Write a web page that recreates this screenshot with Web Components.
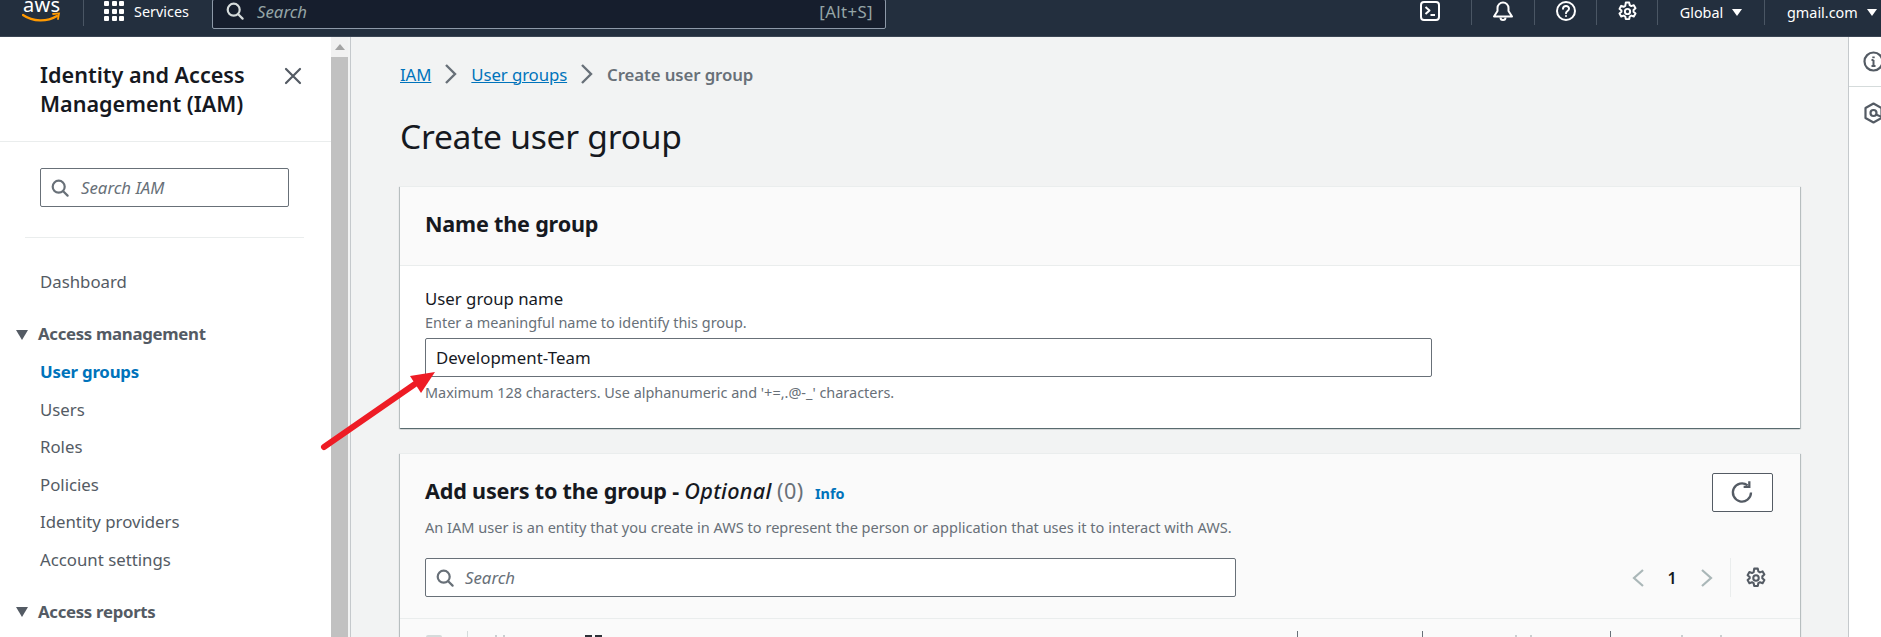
<!DOCTYPE html>
<html>
<head>
<meta charset="utf-8">
<title>Create user group</title>
<style>
  html, body { margin: 0; height: 637px; overflow: hidden; background: #f2f3f3; }
  body { font-family: "Noto Sans", "Liberation Sans", sans-serif; color: #16191f; }
  #app { display: flex; height: 600px; }
</style>
</head>
<body>
<aws-topbar></aws-topbar>
<div id="app">
  <aws-sidenav></aws-sidenav>
  <aws-scrollbar></aws-scrollbar>
  <aws-main></aws-main>
  <aws-rail></aws-rail>
</div>
<red-arrow></red-arrow>

<script>
const searchIcon = (c, s) => `<svg width="${s}" height="${s}" viewBox="0 0 18 18" fill="none" stroke="${c}" stroke-width="2.2" stroke-linecap="round"><circle cx="7.7" cy="7.7" r="6"/><path d="M12.2 12.2 16.6 16.6"/></svg>`;
const gearIcon = (c, s, w) => `<svg width="${s}" height="${s}" viewBox="0 0 16 16" fill="none" stroke="${c}" stroke-width="${w}" stroke-linejoin="round"><path d="M6.7 1.2h2.6l.4 2 1.2.7 1.9-.7 1.3 2.3-1.5 1.3v1.4l1.5 1.3-1.3 2.3-1.9-.7-1.2.7-.4 2H6.7l-.4-2-1.2-.7-1.9.7-1.3-2.3 1.5-1.3V7.3L1.9 6l1.3-2.3 1.9.7 1.2-.7z"/><circle cx="8" cy="8" r="2"/></svg>`;

class AwsTopbar extends HTMLElement {
  constructor() {
    super();
    this.attachShadow({mode: 'open'});
    this.shadowRoot.innerHTML = `
      <style>
        :host { display: flex; align-items: flex-start; box-sizing: border-box; background: #232f3e; color: #fff; font-size: 14.4px; overflow: hidden; border-bottom: 1px solid #3a4553; height: 37px; }
        .logo { width: 83px; height: 26px; position: relative; flex: none; border-right: 1px solid #4a5664; box-sizing: content-box; }
        .logo svg { display: block; margin-left: 22px; margin-top: -3px; }
        .grid { margin: 1px 10px 0 20px; display: grid; grid-template-columns: repeat(3, 5px); grid-auto-rows: 5px; gap: 2.5px; flex: none; }
        .grid i { background: #fff; border-radius: 1px; }
        .services { width: 78px; line-height: 24px; flex: none; font-size: 14.4px; }
        .search { width: 674px; height: 30px; margin-top: -1px; box-sizing: border-box; flex: none; background: #161e2d; border: 1px solid #8d99a8; border-radius: 2px; display: flex; align-items: center; padding: 0 12px 6px 13px; color: #95a5a6; font-size: 16.8px; }
        .search em { margin-left: 13px; flex: 1; }
        .search span { font-size: 16.8px; letter-spacing: .4px; }
        .tools { display: flex; margin-left: auto; align-items: flex-start; }
        .tool { height: 25px; display: flex; justify-content: center; border-right: 1px solid #4a5664; box-sizing: border-box; }
        .tool svg { display: block; margin-top: 1px; }
        .menu { height: 25px; display: flex; align-items: center; gap: 9px; font-size: 14.4px; padding-bottom: 1px; box-sizing: border-box; }
        .tri { width: 0; height: 0; border-left: 5px solid transparent; border-right: 5px solid transparent; border-top: 7px solid #fff; }
      </style>
      <div class="logo">
        <svg width="42" height="28" viewBox="0 0 42 28">
          <text x="1" y="15" font-family="Noto Sans, sans-serif" font-size="20" fill="#fff" textLength="37">aws</text>
          <path d="M1 18c10 7 24 7 34 1" fill="none" stroke="#ff9900" stroke-width="2.2" stroke-linecap="round"/>
          <path d="M31 17l6-.6-1 5.6" fill="none" stroke="#ff9900" stroke-width="1.8" stroke-linecap="round"/>
        </svg>
      </div>
      <div class="grid"><i></i><i></i><i></i><i></i><i></i><i></i><i></i><i></i><i></i></div>
      <div class="services">Services</div>
      <div class="search">${searchIcon('#d5dbdb', 18)}<em>Search</em><span>[Alt+S]</span></div>
      <div class="tools">
        <div class="tool" style="width:63px;padding-right:21px">
          <svg width="20" height="20" viewBox="0 0 20 20" fill="none" stroke="#fff" stroke-width="2" stroke-linejoin="round"><rect x="1" y="1" width="18" height="18" rx="3"/><path d="M5.5 6l4 3.5-4 3.5M10.5 14h4.5"/></svg>
        </div>
        <div class="tool" style="width:63px">
          <svg width="22" height="21" viewBox="0 0 22 21" fill="none" stroke="#fff" stroke-width="2" stroke-linejoin="round"><path d="M2 15.5h18L16.5 10V7a5.5 5.5 0 0 0-11 0v3z"/><path d="M8.5 16.5a2.5 2.5 0 0 0 5 0"/></svg>
        </div>
        <div class="tool" style="width:62px">
          <svg width="20" height="20" viewBox="0 0 20 20" fill="none" stroke="#fff" stroke-width="2" stroke-linecap="round"><circle cx="10" cy="10" r="9"/><path d="M7 7.8c0-4 6.2-3.6 6-.1 0 2.300-3 2.300-3 4.600"/><path d="M10 15v.1"/></svg>
        </div>
        <div class="tool" style="width:61px">
          ${gearIcon('#fff', 21, 1.5)}
        </div>
        <div class="tool menu" style="width:107px">
          <span>Global</span><div class="tri"></div>
        </div>
        <div class="menu" style="width:116px;padding-left:22px">
          <span>gmail.com</span><div class="tri"></div>
        </div>
      </div>
    `;
  }
}

class NavItem extends HTMLElement {
  constructor() {
    super();
    this.attachShadow({mode: 'open'});
    this.shadowRoot.innerHTML = `
      <style>
        :host { display: flex; align-items: center; height: 37.5px; padding-left: 40px; font-size: 16.8px; color: #545b64; }
        :host([active]) { color: #0073bb; font-weight: 700; letter-spacing: -.2px; }
      </style>
      <slot></slot>
    `;
  }
}

class NavSection extends HTMLElement {
  constructor() {
    super();
    this.attachShadow({mode: 'open'});
    this.shadowRoot.innerHTML = `
      <style>
        :host { display: flex; align-items: center; height: 37.5px; margin-top: 14.5px; margin-bottom: .5px; padding-left: 16px; gap: 10px; font-size: 16.8px; font-weight: 700; color: #545b64; letter-spacing: -.3px; }
        .tri { width: 0; height: 0; border-left: 6px solid transparent; border-right: 6px solid transparent; border-top: 10px solid #545b64; margin-top: 2px; }
      </style>
      <div class="tri"></div><slot></slot>
    `;
  }
}

class AwsSidenav extends HTMLElement {
  constructor() {
    super();
    this.attachShadow({mode: 'open'});
    this.shadowRoot.innerHTML = `
      <style>
        :host { display: block; width: 331px; flex: none; background: #fff; overflow: hidden; }
        .head { height: 105px; box-sizing: border-box; border-bottom: 1px solid #eaeded; display: flex; padding: 23px 29px 0 40px; justify-content: space-between; }
        .title { font-size: 21.6px; line-height: 29px; font-weight: 600; margin: 0; color: #16191f; }
        .head svg { margin-top: 7px; flex: none; }
        .find { margin: 26px 27px 0 25px; padding: 0 15px 30px; border-bottom: 1px solid #eaeded; height: 39px; }
        .box { height: 39px; box-sizing: border-box; border: 1px solid #687078; border-radius: 2px; display: flex; align-items: center; padding-left: 10px; gap: 12px; font-size: 16.8px; color: #687078; font-style: italic; }
        .list { margin-top: 25px; }
      </style>
      <div class="head">
        <h2 class="title">Identity and Access Management (IAM)</h2>
        <svg width="18" height="18" viewBox="0 0 18 18" fill="none" stroke="#545b64" stroke-width="2.200" stroke-linecap="round"><path d="M2 2l14 14M16 2 2 16"/></svg>
      </div>
      <div class="find"><div class="box">${searchIcon('#687078', 18)}<span>Search IAM</span></div></div>
      <div class="list">
        <nav-item>Dashboard</nav-item>
        <nav-section>Access management</nav-section>
        <nav-item active>User groups</nav-item>
        <nav-item>Users</nav-item>
        <nav-item>Roles</nav-item>
        <nav-item>Policies</nav-item>
        <nav-item>Identity providers</nav-item>
        <nav-item>Account settings</nav-item>
        <nav-section>Access reports</nav-section>
      </div>
    `;
  }
}

class AwsScrollbar extends HTMLElement {
  constructor() {
    super();
    this.attachShadow({mode: 'open'});
    this.shadowRoot.innerHTML = `
      <style>
        :host { display: flex; flex-direction: column; width: 17px; flex: none; margin-right: 2px; background: #f1f1f1; }
        .up { height: 20px; display: flex; justify-content: center; align-items: center; }
        .up i { width: 0; height: 0; border-left: 5px solid transparent; border-right: 5px solid transparent; border-bottom: 6px solid #a3a3a3; }
        .thumb { flex: 1; background: #c1c1c1; }
      </style>
      <div class="up"><i></i></div><div class="thumb"></div>
    `;
  }
}

class AwsCard extends HTMLElement {
  constructor() {
    super();
    this.attachShadow({mode: 'open'});
    this.shadowRoot.innerHTML = `
      <style>
        :host { display: block; width: 1400px; background: #fff; box-shadow: 0 1px 1px 0 rgba(0,28,36,.45), 1px 1px 1px 0 rgba(0,28,36,.18), -1px 1px 1px 0 rgba(0,28,36,.18); border-top: 1px solid #eaeded; box-sizing: border-box; }
        .head { background: #fafafa; border-bottom: 1px solid #eaeded; }
      </style>
      <div class="head"><slot name="head"></slot></div>
      <slot></slot>
    `;
  }
}

class AwsMain extends HTMLElement {
  constructor() {
    super();
    this.attachShadow({mode: 'open'});
    this.shadowRoot.innerHTML = `
      <style>
        :host { display: block; flex: 1; min-width: 0; border-left: 1px solid #c5c9cc; padding: 25px 0 0 49px; overflow: hidden; font-size: 16.8px; }
        a { color: #0073bb; text-decoration: underline; }
        .crumbs { display: flex; align-items: center; height: 24px; letter-spacing: -.1px; }
        .crumbs svg { margin: 0 13px 0 13px; }
        .crumbs b { color: #687078; font-weight: 600; }
        h1 { font-size: 33.6px; line-height: 40px; font-weight: 400; margin: 30px 0 30px; color: #16191f; letter-spacing: -.25px; }
        h2 { margin: 0; font-size: 21.6px; line-height: 30px; font-weight: 700; letter-spacing: -.2px; }
        .name-head { height: 78px; padding: 22px 25px 0; box-sizing: border-box; }
        .name-body { padding: 21px 25px 0; height: 162px; box-sizing: border-box; }
        .label { line-height: 24px; }
        .small { font-size: 14.55px; line-height: 20px; color: #687078; }
        .name-body .small { font-size: 14.45px; }
        .input { height: 39px; width: 1007px; box-sizing: border-box; margin: 5px 0 6px; border: 1px solid #687078; border-radius: 2px; background: #fff; display: flex; align-items: center; padding-left: 10px; letter-spacing: .1px; }
        .gap { height: 25px; }
        .row { display: flex; justify-content: space-between; align-items: flex-start; }
        .top { padding: 19px 27px 0 25px; }
        .titles { padding-top: 3px; }
        .titles h2 em { font-style: italic; font-weight: 500; letter-spacing: .3px; }
        .titles h2 span { font-weight: 400; color: #687078; letter-spacing: .4px; }
        .titles .info { font-size: 14.4px; font-weight: 700; color: #0073bb; margin-left: 6px; letter-spacing: 0; }
        .titles .small { margin-top: 8px; }
        .btn { width: 61px; height: 39px; box-sizing: border-box; border: 1px solid #545b64; border-radius: 2px; background: #fff; display: flex; align-items: center; justify-content: center; }
        .second { padding: 21px 33px 21px 25px; align-items: center; }
        .search { width: 811px; height: 39px; box-sizing: border-box; border: 1px solid #687078; border-radius: 2px; background: #fff; display: flex; align-items: center; padding-left: 10px; gap: 11px; font-style: italic; color: #687078; }
        .pager { display: flex; align-items: center; height: 39px; font-weight: 600; font-size: 16px; }
        .pager .one { width: 14px; text-align: center; margin: 0 21px 0 20px; }
        .pager .sep { width: 1px; height: 39px; background: #eaeded; margin: 0 14px 0 16px; }
        .table { height: 40px; background: #fafafa; display: flex; align-items: flex-start; }
        .cell { height: 40px; box-sizing: border-box; flex: none; margin-top: 12px; }
        .divd { border-right: 1px solid #687078; }
        .mark { display: block; width: 16px; height: 4px; background: #d5dbdb; margin: 4px 0 0 26px; border-radius: 2px 2px 0 0; }
        .tick { display: block; height: 5px; margin-top: 4px; }
        .tick i { display: inline-block; background: #c9cfd1; width: 2px; height: 3px; vertical-align: top; }
        .tick b { display: inline-block; background: #2c3138; width: 7px; height: 3px; vertical-align: top; margin-right: 3px; }
      </style>
      <nav class="crumbs">
        <a>IAM</a>
        <svg width="14" height="22" viewBox="0 0 14 22" fill="none" stroke="#687078" stroke-width="2.4"><path d="M2 2l9 9-9 9"/></svg>
        <a>User groups</a>
        <svg width="14" height="22" viewBox="0 0 14 22" fill="none" stroke="#687078" stroke-width="2.4"><path d="M2 2l9 9-9 9"/></svg>
        <b>Create user group</b>
      </nav>
      <h1>Create user group</h1>
      <aws-card>
        <div slot="head" class="name-head"><h2>Name the group</h2></div>
        <div class="name-body">
          <div class="label">User group name</div>
          <div class="small" style="margin-top:2px">Enter a meaningful name to identify this group.</div>
          <div class="input">Development-Team</div>
          <div class="small">Maximum 128 characters. Use alphanumeric and '+=,.@-_' characters.</div>
        </div>
      </aws-card>
      <div class="gap"></div>
      <aws-card style="background:#fafafa">
        <div slot="head">
          <div class="row top">
            <div class="titles">
              <h2>Add users to the group - <em>Optional</em> <span>(0)</span> <span class="info">Info</span></h2>
              <div class="small">An IAM user is an entity that you create in AWS to represent the person or application that uses it to interact with AWS.</div>
            </div>
            <div class="btn">
              <svg width="25" height="25" viewBox="0 0 22 22" fill="none" stroke="#545b64" stroke-width="2"><path d="M18.500 11a8 8 0 1 1-3-6.300"/><path d="M17 1v5h-5"/></svg>
            </div>
          </div>
          <div class="row second">
            <div class="search">${searchIcon('#687078', 18)}<span>Search</span></div>
            <div class="pager">
              <svg width="14" height="20" viewBox="0 0 14 20" fill="none" stroke="#aab7b8" stroke-width="2.200"><path d="M12 2 3 10l9 8"/></svg>
              <span class="one">1</span>
              <svg width="14" height="20" viewBox="0 0 14 20" fill="none" stroke="#aab7b8" stroke-width="2.200"><path d="M2 2l9 8-9 8"/></svg>
              <div class="sep"></div>
              ${gearIcon('#545b64', 22, 1.5)}
            </div>
          </div>
        </div>
        <div class="table">
          <div class="cell" style="width:68px;border-right:1px solid #d5dbdb"><i class="mark"></i></div>
          <div class="cell divd" style="width:830px"><span class="tick" style="margin-left:27px"><i></i><i style="margin-left:6px"></i><b style="margin-left:80px"></b><b></b></span></div>
          <div class="cell divd" style="width:125px"></div>
          <div class="cell divd" style="width:188px"><span class="tick" style="margin-left:92px"><i></i><i style="margin-left:13px"></i></span></div>
          <div class="cell" style="width:180px"><span class="tick" style="margin-left:70px"><i></i><i style="margin-left:37px"></i></span></div>
        </div>
      </aws-card>
    `;
  }
}

class AwsRail extends HTMLElement {
  constructor() {
    super();
    this.attachShadow({mode: 'open'});
    this.shadowRoot.innerHTML = `
      <style>
        :host { display: block; width: 33px; flex: none; box-sizing: border-box; background: #fff; border-left: 1px solid #c5c9cc; overflow: hidden; }
        .ico { padding: 15px 0 0 14px; }
        .tab { height: 50px; box-sizing: border-box; border-bottom: 1px solid #d5dbdb; padding-top: 14px; }
        svg { display: block; }
      </style>
      <div class="ico tab">
        <svg width="21" height="21" viewBox="0 0 21 21" fill="none" stroke="#545b64" stroke-width="2.200"><circle cx="10.500" cy="10.500" r="9"/><path d="M10.500 9v6M8.500 15h4M8.500 9h2" stroke-width="2"/><path d="M10.500 5.500v1.700" stroke-width="2.400"/></svg>
      </div>
      <div class="ico">
        <svg width="21" height="22" viewBox="0 0 21 22" fill="none" stroke="#545b64" stroke-width="2.200" stroke-linejoin="round"><path d="M10.500 1.500 18.500 6v10l-8 4.500-8-4.500V6z"/><circle cx="10.500" cy="11" r="3"/><path d="M13 12.500 19 15"/></svg>
      </div>
    `;
  }
}

class RedArrow extends HTMLElement {
  constructor() {
    super();
    this.attachShadow({mode: 'open'});
    this.shadowRoot.innerHTML = `
      <style>
        :host { display: block; position: absolute; left: 0; top: 0; pointer-events: none; }
        svg { display: block; }
      </style>
      <svg width="500" height="500" viewBox="0 0 500 500">
        <path d="M324 447 415 384" stroke="#ee1c25" stroke-width="6" stroke-linecap="round" fill="none"/>
        <path d="M435 372 410 376 421 393z" fill="#ee1c25"/>
      </svg>
    `;
  }
}

// children first so the nested elements upgrade cleanly
customElements.define('nav-item', NavItem);
customElements.define('nav-section', NavSection);
customElements.define('aws-card', AwsCard);
customElements.define('aws-topbar', AwsTopbar);
customElements.define('aws-sidenav', AwsSidenav);
customElements.define('aws-scrollbar', AwsScrollbar);
customElements.define('aws-main', AwsMain);
customElements.define('aws-rail', AwsRail);
customElements.define('red-arrow', RedArrow);
</script>
</body>
</html>
